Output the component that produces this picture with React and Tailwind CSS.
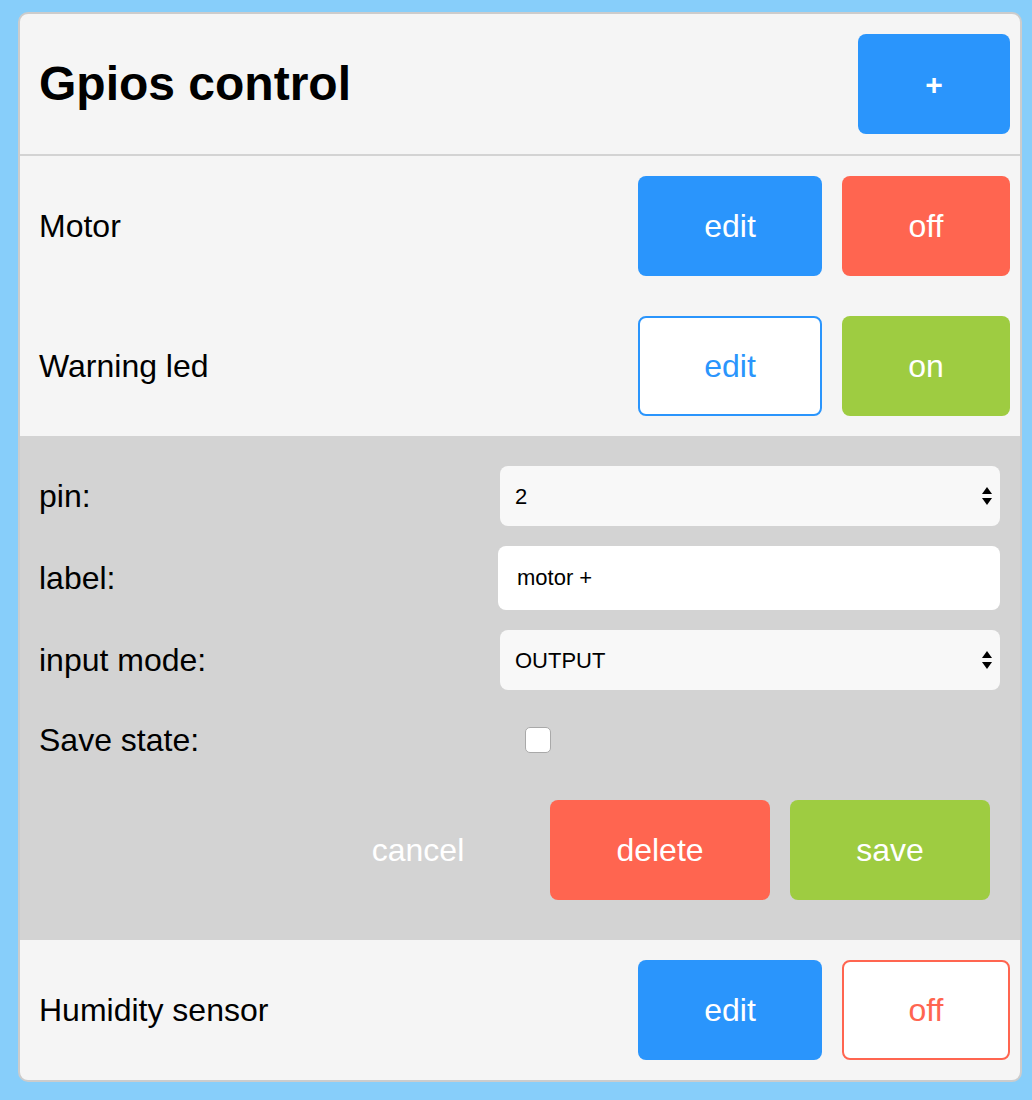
import { useState } from 'react'

const font = { fontFamily: '"Liberation Sans", Arial, Helvetica, sans-serif' }

function Arrows() {
  return (
    <svg width="10" height="18" viewBox="0 0 10 18" className="pointer-events-none absolute right-[8px] top-1/2 -translate-y-1/2">
      <path d="M5 0 L10 7 L0 7 Z" fill="#000" />
      <path d="M0 11 L10 11 L5 18 Z" fill="#000" />
    </svg>
  )
}

function Row({ label, children }) {
  return (
    <div className="flex h-[140px] items-center justify-between pl-[19px] pr-[10px]">
      <span className="text-[32px] text-black">{label}</span>
      <div className="flex gap-[20px]">{children}</div>
    </div>
  )
}

export default function App() {
  const [pin, setPin] = useState('2')
  const [label, setLabel] = useState('motor +')
  const [mode, setMode] = useState('OUTPUT')
  const [saveState, setSaveState] = useState(false)

  return (
    <div className="min-h-screen bg-[#87cefa] pl-[18px] pt-[12px] pb-[18px]" style={font}>
      <div className="h-[1070px] w-[1004px] overflow-hidden rounded-[10px] border-2 border-[#cccccc] bg-[#f5f5f5]">
        <div className="flex h-[142px] items-center justify-between border-b-2 border-[#d3d3d3] pl-[19px] pr-[10px]">
          <h1 className="text-[48px] font-bold text-black">Gpios control</h1>
          <button className="h-[100px] w-[152px] rounded-[8px] bg-[#2a95fc] text-[30px] font-bold text-white">+</button>
        </div>

        <Row label="Motor">
          <button className="h-[100px] w-[184px] rounded-[8px] bg-[#2a95fc] text-[32px] text-white">edit</button>
          <button className="h-[100px] w-[168px] rounded-[8px] bg-[#ff6550] text-[32px] text-white">off</button>
        </Row>

        <Row label="Warning led">
          <button className="h-[100px] w-[184px] rounded-[8px] border-2 border-[#2a95fc] bg-white text-[32px] text-[#2a95fc]">edit</button>
          <button className="h-[100px] w-[168px] rounded-[8px] bg-[#9ecc41] text-[32px] text-white">on</button>
        </Row>

        <div className="h-[504px] bg-[#d3d3d3] pl-[19px] pr-[20px] pt-[30px]">
          <div className="flex flex-col gap-[20px]">
            <div className="flex h-[60px] items-center">
              <span className="w-[461px] text-[32px] text-black">pin:</span>
              <div className="relative w-[500px]">
                <select
                  value={pin}
                  onChange={e => setPin(e.target.value)}
                  className="h-[60px] w-full appearance-none rounded-[8px] bg-[#f8f8f8] pl-[15px] text-[22px] text-black outline-none"
                  style={font}
                >
                  <option>2</option>
                  <option>4</option>
                  <option>5</option>
                </select>
                <Arrows />
              </div>
            </div>

            <div className="flex h-[64px] items-center">
              <span className="w-[459px] text-[32px] text-black">label:</span>
              <input
                value={label}
                onChange={e => setLabel(e.target.value)}
                className="h-[64px] w-[502px] rounded-[8px] bg-white pl-[19px] text-[22px] text-black outline-none"
                style={font}
              />
            </div>

            <div className="flex h-[60px] items-center">
              <span className="w-[461px] text-[32px] text-black">input mode:</span>
              <div className="relative w-[500px]">
                <select
                  value={mode}
                  onChange={e => setMode(e.target.value)}
                  className="h-[60px] w-full appearance-none rounded-[8px] bg-[#f8f8f8] pl-[15px] text-[22px] text-black outline-none"
                  style={font}
                >
                  <option>OUTPUT</option>
                  <option>INPUT</option>
                  <option>INPUT_PULLUP</option>
                </select>
                <Arrows />
              </div>
            </div>

            <div className="flex h-[60px] items-center">
              <span className="w-[486px] text-[32px] text-black">Save state:</span>
              <button
                onClick={() => setSaveState(!saveState)}
                className="h-[26px] w-[26px] rounded-[5px] border border-[#a9a9a9] bg-white text-[16px] leading-none"
              >
                {saveState ? '✓' : ''}
              </button>
            </div>
          </div>

          <div className="mt-[30px] flex justify-end gap-[20px] pr-[10px]">
            <button className="h-[100px] w-[224px] rounded-[8px] text-[32px] text-white">cancel</button>
            <button className="h-[100px] w-[220px] rounded-[8px] bg-[#ff6550] text-[32px] text-white">delete</button>
            <button className="h-[100px] w-[200px] rounded-[8px] bg-[#9ecc41] text-[32px] text-white">save</button>
          </div>
        </div>

        <Row label="Humidity sensor">
          <button className="h-[100px] w-[184px] rounded-[8px] bg-[#2a95fc] text-[32px] text-white">edit</button>
          <button className="h-[100px] w-[168px] rounded-[8px] border-2 border-[#ff6550] bg-white text-[32px] text-[#ff6550]">off</button>
        </Row>
      </div>
    </div>
  )
}
